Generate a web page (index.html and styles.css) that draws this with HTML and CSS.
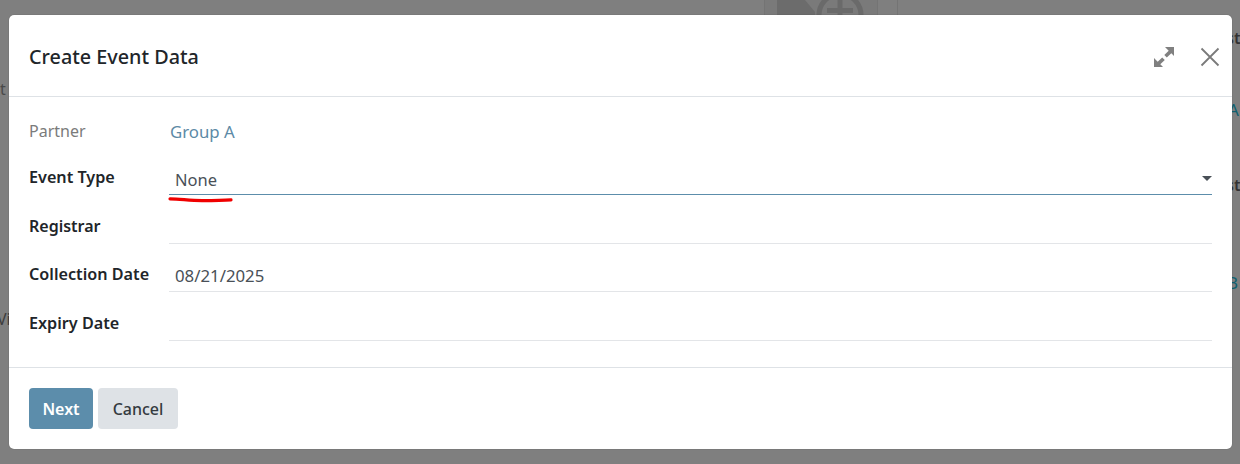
FILE: index.html
```html
<!DOCTYPE html>
<html lang="en">
<head>
<meta charset="utf-8">
<title>Create Event Data</title>
<link rel="stylesheet" href="styles.css">
</head>
<body>
<div class="backdrop" aria-hidden="true">
  <div class="bg-line bg-line-a"></div>
  <div class="bg-line bg-line-b"></div>
  <div class="bg-line bg-line-c"></div>
  <div class="bg-thumb">
    <svg width="112" height="15" viewBox="0 0 112 15"><path d="M0 0H112V15H0Z" fill="#7a7a7a"/><path d="M12 0H40L50 12V15H12Z" fill="#6c6c6c"/><circle cx="75" cy="15" r="21" fill="#7a7a7a" stroke="#6a6a6a" stroke-width="5"/><path d="M75 0V15M62 10.500H88" stroke="#6a6a6a" stroke-width="5" fill="none"/></svg>
  </div>
  <span class="bg-text bg-t1">t</span>
  <span class="bg-text bg-t3">Vi</span>
  <span class="bg-text bg-t4">st</span>
  <span class="bg-text bg-t5">st</span>
  <span class="bg-text bg-link bg-t6">A</span>
  <span class="bg-text bg-link bg-t7">B</span>
</div>
<div class="modal">
  <header class="modal-header">
    <h4 class="modal-title">Create Event Data</h4>
    <div class="modal-actions">
      <svg class="icon-expand" width="22" height="22" viewBox="0 0 22 22"><path d="M12 1H21V10L18.300 7.300L13.800 11.500L11.300 9L15.700 4.700Z M1 12V21H10L7.300 18.300L11.800 14L9.200 11.400L4.700 15.700Z" fill="#808080"/></svg>
      <svg class="icon-close" width="20" height="20" viewBox="0 0 20 20"><path d="M1.500 1.500L18.500 18.500M18.500 1.500L1.500 18.500" stroke="#7a7a7a" stroke-width="1.800" fill="none"/></svg>
    </div>
  </header>
  <main class="modal-body">
    <div class="row row-partner">
      <label class="label label-muted">Partner</label>
      <a class="link">Group A</a>
    </div>
    <div class="row row-type">
      <label class="label">Event Type</label>
      <div class="field field-active">
        <span class="value">None</span>
        <span class="caret"></span>
        <svg class="scribble" width="66" height="8" viewBox="0 0 66 8"><path d="M2 2.800C14 3.200 22 4.600 34 4.600C44 4.600 54 4.600 63 3.800" stroke="#f00000" stroke-width="3.200" stroke-linecap="round" fill="none"/></svg>
      </div>
    </div>
    <div class="row row-reg">
      <label class="label">Registrar</label>
      <div class="field"></div>
    </div>
    <div class="row row-date">
      <label class="label">Collection Date</label>
      <div class="field"><span class="value">08/21/2025</span></div>
    </div>
    <div class="row row-expiry">
      <label class="label">Expiry Date</label>
      <div class="field"></div>
    </div>
  </main>
  <footer class="modal-footer">
    <button class="btn btn-primary">Next</button>
    <button class="btn btn-secondary">Cancel</button>
  </footer>
</div>
</body>
</html>
```
FILE: styles.css
```css
* { box-sizing: border-box; }
html, body { margin: 0; height: 464px; overflow: hidden; }
body {
  background: #7f7f7f;
  font-family: "Noto Sans", "Open Sans", sans-serif;
  font-size: 16px;
  color: #212529;
  padding: 15px 8px 15px 9px;
  position: relative;
}
.backdrop { position: absolute; inset: 0; overflow: hidden; }
.bg-line { position: absolute; top: 0; height: 15px; width: 1px; background: #747474; }
.bg-line-a { left: 764px; }
.bg-line-b { left: 877px; }
.bg-line-c { left: 897px; }
.bg-thumb { position: absolute; left: 765px; top: 0; width: 112px; height: 15px; overflow: hidden; }
.bg-thumb svg { display: block; }
.bg-text { position: absolute; font-size: 16px; font-weight: 600; color: #333; line-height: 20px; }
.bg-t1 { left: 0; top: 79px; font-weight: 400; color: #4a4a4a; }
.bg-t3 { left: -3px; top: 309px; font-weight: 400; color: #3d3d3d; }
.bg-t4 { left: 1226px; top: 28px; }
.bg-t5 { left: 1226px; top: 175px; }
.bg-link { color: #0f5f6f; font-weight: 400; font-size: 17px; }
.bg-t6 { left: 1228px; top: 100px; }
.bg-t7 { left: 1227px; top: 273px; }

.modal {
  position: relative;
  height: 434px;
  background: #fff;
  border-radius: 5px;
  display: flex;
  flex-direction: column;
  box-shadow: 0 0 1px rgba(0, 0, 0, .45);
}
.modal-header {
  height: 82px;
  flex: none;
  border-bottom: 1px solid #dee2e6;
  display: flex;
  align-items: center;
  justify-content: space-between;
  padding: 2px 12px 0 20px;
}
.modal-title { margin: 0; font-size: 19.800px; font-weight: 500; color: #212529; line-height: 28px; }
.modal-actions { display: flex; align-items: center; gap: 25px; }
.modal-actions svg { display: block; }

.modal-body {
  height: 271px;
  flex: none;
  padding: 0 20px;
  border-bottom: 1px solid #dee2e6;
}
.row { display: flex; align-items: stretch; }
.label { width: 140px; flex: none; font-weight: 600; font-size: 16.200px; line-height: 22px; color: #212529; white-space: nowrap; }
.label-muted { font-size: 16px; font-weight: 400; color: #7b7b7b; }
.link { margin-left: 1px; padding-top: 23px; font-size: 16.800px; line-height: 24px; color: #5c8aa6; }
.field {
  position: relative;
  flex: 1;
  border-bottom: 1px solid #e3e5e8;
  padding-left: 6px;
}
.field-active { border-bottom-color: #5c8dab; }
.value { display: block; font-size: 16.500px; line-height: 24px; color: #495057; }
.row-partner { height: 48px; }
.row-partner .label { padding-top: 23px; }
.row-type { height: 50px; }
.row-type .label { padding-top: 21px; }
.row-type .value { padding-top: 23px; box-sizing: content-box; }
.row-reg { height: 49px; }
.row-reg .label { padding-top: 20px; font-size: 16px; }
.row-date { height: 48px; }
.row-date .label { padding-top: 19px; }
.row-date .value { padding-top: 20px; box-sizing: content-box; font-size: 16.800px; }
.row-expiry { height: 49px; }
.row-expiry .label { padding-top: 20px; }
.caret {
  position: absolute;
  right: 0;
  top: 31px;
  width: 0;
  height: 0;
  border-left: 5px solid transparent;
  border-right: 5px solid transparent;
  border-top: 5px solid #495057;
}
.scribble { position: absolute; left: -1px; top: 51px; }

.modal-footer {
  flex: 1;
  display: flex;
  gap: 5px;
  align-items: flex-start;
  padding: 20px 20px 0;
}
.btn {
  height: 41px;
  border: 0;
  border-radius: 4px;
  font-family: inherit;
  font-size: 16px;
  font-weight: 600;
  padding: 0;
}
.btn-primary { width: 64px; background: #5c8dab; color: #fff; }
.btn-secondary { width: 80px; background: #dee2e6; color: #343a40; font-weight: 500; }
```
